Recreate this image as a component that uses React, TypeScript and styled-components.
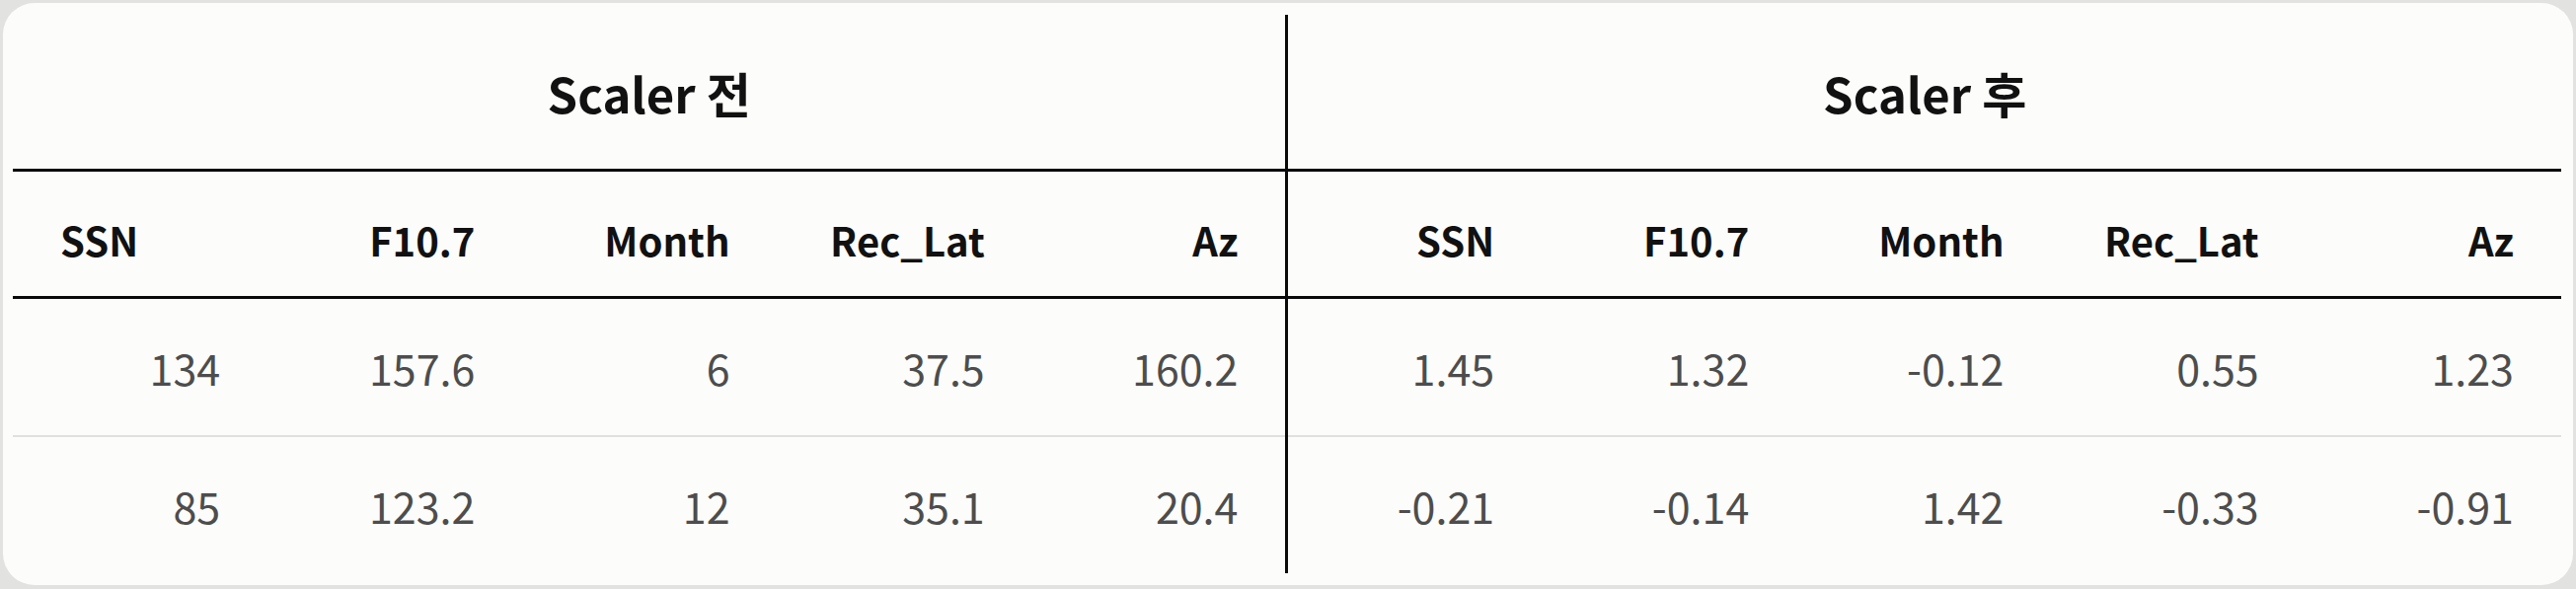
import React from "react";
import styled, { createGlobalStyle } from "styled-components";

const Global = createGlobalStyle`
  html, body {
    margin: 0;
    padding: 0;
    background: #e2e2e0;
  }
  body {
    font-family: "Noto Sans CJK KR", "Noto Sans", sans-serif;
  }
`;

const Card = styled.div`
  margin: 3px;
  box-sizing: border-box;
  height: 590px;
  background: #fcfcfa;
  border-radius: 32px;
  padding: 12px 12px 11px 10px;
`;

const Table = styled.table`
  width: 100%;
  border-collapse: collapse;
  table-layout: fixed;
`;

const GroupHead = styled.th<{ $divider?: boolean }>`
  height: 156px;
  padding: 0;
  font-size: 49px;
  font-weight: 700;
  color: #111;
  text-align: center;
  border-bottom: 3px solid #0a0a0a;
  border-right: ${(p) => (p.$divider ? "3px solid #0a0a0a" : "none")};
`;

const ColHead = styled.th<{ $divider?: boolean; $left?: boolean }>`
  height: 114px;
  padding: 12px 48px 0 48px;
  font-size: 40px;
  font-weight: 700;
  color: #111;
  text-align: ${(p) => (p.$left ? "left" : "right")};
  border-bottom: 3px solid #0a0a0a;
  border-right: ${(p) => (p.$divider ? "3px solid #0a0a0a" : "none")};
`;

const Row = styled.tr<{ $last?: boolean }>`
  border-bottom: ${(p) => (p.$last ? "none" : "2px solid #e0e0dc")};
`;

const Cell = styled.td<{ $divider?: boolean }>`
  height: 138px;
  padding: 0 48px;
  font-size: 43px;
  font-weight: 400;
  color: #4d4d4d;
  text-align: right;
  border-right: ${(p) => (p.$divider ? "3px solid #0a0a0a" : "none")};
`;

const cols = ["SSN", "F10.7", "Month", "Rec_Lat", "Az"];

const rows = [
  ["134", "157.6", "6", "37.5", "160.2", "1.45", "1.32", "-0.12", "0.55", "1.23"],
  ["85", "123.2", "12", "35.1", "20.4", "-0.21", "-0.14", "1.42", "-0.33", "-0.91"],
];

export default function App() {
  const allCols = [...cols, ...cols];
  return (
    <>
      <Global />
      <Card>
        <Table>
          <thead>
            <tr>
              <GroupHead colSpan={5} $divider>
                Scaler 전
              </GroupHead>
              <GroupHead colSpan={5}>Scaler 후</GroupHead>
            </tr>
            <tr>
              {allCols.map((c, i) => (
                <ColHead key={i} $left={i === 0} $divider={i === 4}>
                  {c}
                </ColHead>
              ))}
            </tr>
          </thead>
          <tbody>
            {rows.map((r, ri) => (
              <Row key={ri} $last={ri === rows.length - 1}>
                {r.map((v, i) => (
                  <Cell key={i} $divider={i === 4}>
                    {v}
                  </Cell>
                ))}
              </Row>
            ))}
          </tbody>
        </Table>
      </Card>
    </>
  );
}
